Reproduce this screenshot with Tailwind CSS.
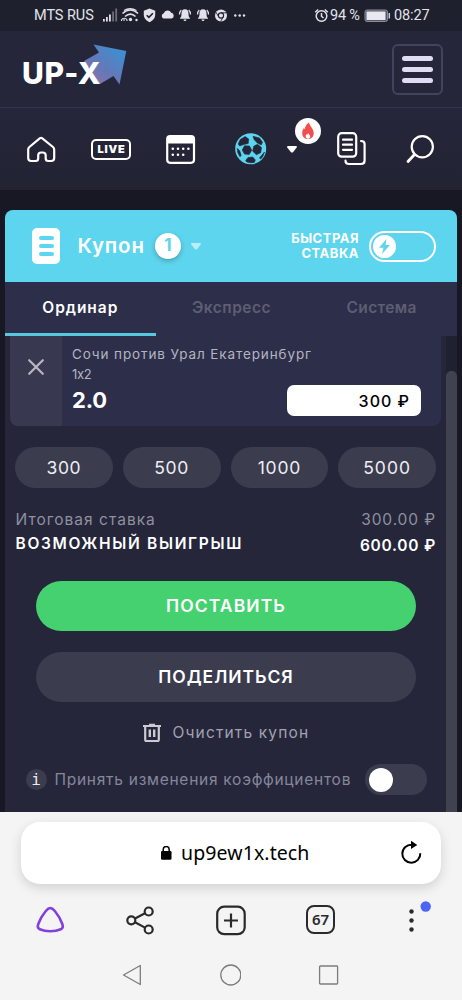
<!DOCTYPE html>
<html lang="ru">
<head>
<meta charset="utf-8">
<title>UP-X</title>
<script src="https://cdn.jsdelivr.net/npm/@tailwindcss/browser@4"></script>
</head>
<body class="w-[462px] h-[1000px] overflow-hidden bg-[#171823] font-['Inter','Open_Sans',sans-serif] text-white whitespace-nowrap flex flex-col">

<!-- status bar -->
<div class="h-[31px] shrink-0 bg-[#1f202e] flex items-center text-[14.5px] font-['Roboto',sans-serif] text-[#e2e3ea] pl-[34px]">
  <span class="w-[68px] tracking-[-0.06px]">MTS RUS</span>
  <svg class="w-[146px] h-[31px] shrink-0" viewBox="102 0 146 31" fill="#e2e3ea">
    <path d="M103 19h1.800v2.500h-1.800zM106 17h1.800v4.500h-1.800zM109 14.500h1.800v7h-1.800z"/>
    <path d="M112.200 11.500h1.800v10h-1.800zM115.300 8.500h1.800v13h-1.800z" opacity=".4"/>
    <g fill="none" stroke="#e2e3ea" stroke-width="1.600"><path d="M122.500 13.500q8-7 15.500 0M125 16.500q5.500-4.800 10.500 0"/><path d="M124 10.500q6-3.500 12.500 0" stroke-width="1.300"/><path d="M121.500 21v-1a3 3 0 0 1 5.500 0v1M124 21v-2" stroke-width="1.100"/></g>
    <circle cx="130.500" cy="19.500" r="1.700"/><circle cx="136.500" cy="20" r="1.200"/>
    <path d="M149.500 8.500l5.700 2.200v4.300q0 4.500-5.700 7.200-5.700-2.700-5.700-7.200v-4.300z"/><path d="M146.700 15.200l2.200 2.200 4-4.200" fill="none" stroke="#1f202e" stroke-width="1.600"/>
    <path d="M163.500 18.500a2.800 2.800 0 0 1 .3-5.300 4 4 0 0 1 7.400-.5 3 3 0 0 1 .5 5.800z"/>
    <g id="bell"><path d="M185 9.200c2.700 0 3.500 2 3.500 4.200 0 3 .6 3.800 1.500 4.600v.8h-10v-.8c.9-.8 1.500-1.600 1.500-4.600 0-2.200.8-4.200 3.500-4.200zM183.500 19.500h3a1.500 1.500 0 0 1-3 0z"/><path d="M179.500 14.500q0-3 1.800-4.500M190.500 14.500q0-3-1.800-4.500" fill="none" stroke="#e2e3ea" stroke-width="1.200"/></g>
    <use href="#bell" x="18"/>
    <circle cx="221" cy="15.500" r="6"/><g fill="none" stroke="#1f202e"><circle cx="221" cy="15.500" r="2.600" stroke-width="1.100"/><path d="M221 12.800h5.500M218.700 16.800l-2.800-4.700M223.300 16.900l-2.700 4.500" stroke-width=".9"/></g>
    <circle cx="235.300" cy="15.500" r="1.200"/><circle cx="239.700" cy="15.500" r="1.200"/><circle cx="244" cy="15.500" r="1.200"/>
  </svg>
  <svg class="ml-[66px] w-[15px] h-[15px] shrink-0" viewBox="0 0 15 15" fill="none" stroke="#e2e3ea" stroke-width="1.500"><circle cx="7.500" cy="8" r="5.300"/><path d="M7.500 5v3.200l2 1.800M1.200 4.200l3-2.700M13.800 4.200l-3-2.700"/></svg>
  <span class="ml-[1px] w-[34px] tracking-[-0.2px]">94 %</span>
  <svg class="w-[30px] h-[15px] shrink-0" viewBox="0 0 30 15"><rect x="1" y="2" width="22.500" height="11.500" rx="2" fill="#55566a" stroke="#8b8c98"/><rect x="2.500" y="3.500" width="19" height="8.500" rx=".5" fill="#e8e8ee"/><path d="M25.300 5v5.500" stroke="#c9cad2" stroke-width="1.500"/></svg>
  <span class="tracking-[-0.1px]">08:27</span>
</div>

<!-- site header -->
<header class="h-[77px] shrink-0 bg-[#25263a] border-b border-[#34354c] flex items-start justify-between pl-[22px] pr-[19px]">
  <div class="relative w-[106px] h-[60px]">
    <svg class="absolute left-[58px] top-[12px]" width="48" height="44" viewBox="80 43 48 44">
      <defs><linearGradient id="arrow" x1="1" y1="0" x2="0.100" y2="1"><stop offset=".15" stop-color="#3e8fd0"/><stop offset=".6" stop-color="#6478b8"/><stop offset="1" stop-color="#8d72ae"/></linearGradient></defs>
      <path d="M93.500 44.500L126.300 51 119.500 84.500 113.500 76 100 84 84 61 99 52.500z" fill="url(#arrow)"/>
    </svg>
    <span class="absolute left-[-1px] top-[24px] text-[30px] leading-[36px] font-['Inter'] font-extrabold tracking-[0.600px] ml-[1px]">UP-X</span>
  </div>
  <div class="mt-[13px] w-[51px] h-[51px] rounded-[6px] border-2 border-[#42435c] flex flex-col items-center justify-center gap-[6px]">
    <i class="block w-[31px] h-[5px] rounded-full bg-[#dfdcf4]"></i>
    <i class="block w-[31px] h-[5px] rounded-full bg-[#dfdcf4]"></i>
    <i class="block w-[31px] h-[5px] rounded-full bg-[#dfdcf4]"></i>
  </div>
</header>

<!-- navigation -->
<nav class="h-[82px] shrink-0 bg-gradient-to-b from-[#25263a] to-[#222333] flex items-center pl-[26px]">
  <svg class="w-[30px] h-[30px] shrink-0" viewBox="26 134 30 30" fill="none" stroke="#fff" stroke-width="2.200" stroke-linejoin="round"><path d="M40 138.200q1-.8 2 0l11 8.800q1.200 1 1.200 2.500v8.500q0 3-3 3h-3q-2.500 0-2.500-2.500v-3q0-3-3-3h-1.500q-3 0-3 3v3q0 2.500-2.500 2.500h-4.500q-3 0-3-3v-8.500q0-1.500 1.200-2.500z"/></svg>
  <div class="ml-[35px] w-[40px] h-[21px] shrink-0 rounded-[5px] border-2 border-white flex items-center justify-center text-[11px] leading-none font-black tracking-[0.800px] pl-[1px]">LIVE</div>
  <svg class="ml-[35px] w-[30px] h-[32px] shrink-0" viewBox="166 132 30 32"><rect x="167.200" y="135.200" width="26.800" height="26.600" rx="3" fill="none" stroke="#fff" stroke-width="2.200"/><path d="M167 142.500v-4q0-3.500 3-3.500h21q3 0 3 3.500v4z" fill="#fff"/><path d="M172.800 147.800h18M172.800 153.800h12" fill="none" stroke="#fff" stroke-width="2.600" stroke-linecap="round" stroke-dasharray="0 5.200"/></svg>
  <svg class="ml-[38px] w-[34px] h-[34px] shrink-0" viewBox="234 132 34 34"><circle cx="250.700" cy="148.800" r="15.500" fill="#5dd5ee"/><g fill="#25263a" stroke="#25263a" stroke-width=".6" stroke-linejoin="round"><path d="M244.500 145.800l5 .2 2.300 4.200-2.600 4.200-4.700-.3-2.300-4z"/><path d="M257.500 144.300l4 3.200-.8 5.200-4.300 2-3.700-3.500 1-5z"/><path d="M240.200 139.500l5-3 3.500 2.500-.5 4.500-4.500 1-4 1.500-1.500-2z"/><path d="M253 136.300l6.500 1.700 3 4.200-1.300 2.800-4.200-2.200-3-3.500z"/><path d="M237.200 148.300l2.500 2.500 1.500 4.500-1.200 1.500q-3-4-2.800-8.500z"/><path d="M248 157.500l4.800-.5 2.500 3-1 2.500q-4 .8-8-.7l-.5-1.500z"/><path d="M262 155l2.500-3q-1 4.500-3.700 7l-1.300-1z"/></g></svg>
  <div class="relative ml-[18px] w-[36px] h-[82px] shrink-0">
    <svg class="absolute left-0 top-[37px]" width="12" height="9" viewBox="0 0 12 9"><path d="M2 1h8q1.500.3.700 1.500L7 7.200q-1 .8-2 0L1.200 2.500Q.6 1.300 2 1z" fill="#fff"/></svg>
    <div class="absolute left-[9px] top-[10px] w-[26px] h-[26px] rounded-full bg-white flex items-center justify-center">
      <svg width="14" height="18" viewBox="0 0 14 18"><path d="M8 .5c.5 3.500 4.700 6 4.700 10.500 0 4-2.500 6-5.700 6s-5.800-2-5.800-6c0-2.500 1-4 1.800-5l.8 1.500C4 5 5 2 8 .5z" fill="#f24e4e"/><path d="M7 11l2 2.500q1 3-2 3.200-2.800-.2-2.300-3.200l.8-1.200.8.500z" fill="#fff"/></svg>
    </div>
  </div>
  <svg class="ml-[14px] w-[30px] h-[36px] shrink-0" viewBox="336 131 30 36" fill="none" stroke="#fff" stroke-width="2.200" stroke-linecap="round"><rect x="338.200" y="133.200" width="18" height="23.500" rx="3.500"/><path d="M343 139.700h9M343 144.700h9M343 149.800h9M361 141q3.600 0 3.600 3v16.500q0 3.500-3.600 3.500h-12q-3.500 0-3.500-3.300"/></svg>
  <svg class="ml-[38px] w-[32px] h-[32px] shrink-0" viewBox="404 133 32 32" fill="none" stroke="#fff" stroke-width="2.200" stroke-linecap="round"><circle cx="422.300" cy="146.700" r="10.600"/><path d="M414.500 154.500l-6.500 7" stroke-width="2.800"/></svg>
</nav>

<!-- coupon -->
<main class="h-[622px] shrink-0 pt-[20px] px-[5px]">
  <section class="w-[452px] h-[602px] rounded-t-[8px] overflow-hidden bg-[#25263a] flex flex-col">
    <div class="h-[72px] shrink-0 bg-[#5dd5ee] flex items-center pl-[27px]">
      <div class="w-[28px] h-[36px] rounded-[5px] bg-white flex flex-col items-center justify-center gap-[4px]">
        <i class="block w-[15px] h-[4px] rounded-full bg-[#5dd5ee]"></i>
        <i class="block w-[15px] h-[4px] rounded-full bg-[#5dd5ee]"></i>
        <i class="block w-[15px] h-[4px] rounded-full bg-[#5dd5ee]"></i>
      </div>
      <span class="ml-[17.500px] w-[77.500px] text-[20.500px] font-semibold tracking-[0.850px]">Купон</span>
      <span class="w-[26px] h-[26px] rounded-full bg-white text-[#5dd5ee] text-[17px] font-bold shadow-[0_2px_5px_rgba(0,0,0,.25)] flex items-center justify-center">1</span>
      <svg class="ml-[9px]" width="12" height="9" viewBox="0 0 12 9"><path d="M2 1h8q1.500.3.700 1.500L7 7.200q-1 .8-2 0L1.200 2.500Q.6 1.300 2 1z" fill="#b9eef8"/></svg>
      <div class="ml-auto text-right text-[13px] leading-[15px] font-bold tracking-[0.500px]">БЫСТРАЯ<br>СТАВКА</div>
      <div class="ml-[10px] mr-[21px] w-[67px] h-[31px] rounded-full border-2 border-white flex items-center pl-[2px]">
        <div class="w-[23px] h-[23px] rounded-full bg-white flex items-center justify-center"><svg width="13" height="17" viewBox="0 0 13 17"><path d="M8.500 1L1 9.700h4.500L4 16l8-9H7.500z" fill="#5dd5ee"/></svg></div>
      </div>
    </div>
    <div class="h-[54px] shrink-0 bg-[#2d2e49] grid grid-cols-3 text-[15.500px] font-semibold text-[#5d5e74] text-center leading-[51px]">
      <div class="border-b-[3px] border-[#58c8e0] text-white tracking-[0.950px]">Ординар</div>
      <div class="tracking-[0.500px] pl-[1px]">Экспресс</div>
      <div class="tracking-[0.350px]">Система</div>
    </div>
    <div class="grow flex">
      <div class="w-[441px] flex flex-col">
        <div class="ml-[5px] w-[431px] h-[90px] shrink-0 rounded-b-[8px] overflow-hidden bg-[#2d2e49] flex">
          <div class="w-[52px] bg-[#383950] flex justify-center pt-[22px]"><svg width="18" height="18" viewBox="0 0 18 18" stroke="#b6b7c2" stroke-width="2.200" stroke-linecap="round"><path d="M2.200 2.200l13.600 13.600M15.800 2.200L2.200 15.800"/></svg></div>
          <div class="pl-[10px] pt-[8px] w-[379px]">
            <div class="text-[13.500px] leading-[20px] tracking-[0.880px] text-[#b3b4c1]">Сочи против Урал Екатеринбург</div>
            <div class="text-[13px] leading-[20px] tracking-[-0.300px] text-[#b3b4c1]">1x2</div>
            <div class="flex">
              <span class="text-[22px] leading-[32px] font-bold tracking-[-0.200px] w-[215px]">2.0</span>
              <div class="mt-[1px] w-[134px] h-[31px] rounded-[7px] bg-white text-black text-[16px] font-medium tracking-[1px] flex items-center justify-end pr-[11px]">300 ₽</div>
            </div>
          </div>
        </div>
        <div class="mt-[20.500px] ml-[10px] w-[421px] h-[41px] shrink-0 grid grid-cols-4 gap-[10px] text-[17.500px] text-[#edeef4] text-center leading-[41px]">
          <div class="rounded-full bg-[#3b3c4e] tracking-[0.700px]">300</div>
          <div class="rounded-full bg-[#3b3c4e] tracking-[0.700px]">500</div>
          <div class="rounded-full bg-[#3b3c4e] tracking-[0.800px]">1000</div>
          <div class="rounded-full bg-[#3b3c4e] tracking-[1px]">5000</div>
        </div>
        <div class="mt-[20.500px] ml-[10.500px] w-[420.500px] flex justify-between text-[15.500px] leading-[24px] text-[#8f90a0]"><span class="tracking-[1.020px]">Итоговая ставка</span><span class="tracking-[0.900px]">300.00 ₽</span></div>
        <div class="ml-[10.500px] w-[420.500px] flex justify-between text-[15.500px] leading-[24px] font-semibold"><span class="tracking-[1.680px]">ВОЗМОЖНЫЙ ВЫИГРЫШ</span><span class="tracking-[0.750px] pt-[2px]">600.00 ₽</span></div>
        <div class="mt-[23px] ml-[31px] w-[380px] h-[50px] shrink-0 rounded-full bg-[#45d16f] text-center text-[17.500px] leading-[50px] font-semibold tracking-[1.100px]">ПОСТАВИТЬ</div>
        <div class="mt-[21px] ml-[31px] w-[380px] h-[50px] shrink-0 rounded-full bg-[#3b3c4e] text-center text-[17.500px] leading-[50px] font-semibold tracking-[0.950px]">ПОДЕЛИТЬСЯ</div>
        <div class="mt-[18px] h-[26px] shrink-0 flex items-center pl-[137px] text-[15.500px] text-[#a1a2b0] tracking-[1.150px]">
          <svg class="mr-[10.500px]" width="20" height="20" viewBox="0 0 20 20"><path d="M1 3h18M7 1.700h6" stroke="#c9cad2" stroke-width="2"/><path d="M3.200 4v12.500q0 1.500 1.500 1.500h10.600q1.500 0 1.500-1.500V4" fill="none" stroke="#c9cad2" stroke-width="2.200"/><path d="M7.800 6.500v7.500M12.200 6.500v7.500" stroke="#c9cad2" stroke-width="2.400"/></svg>Очистить купон
        </div>
        <div class="mt-[18px] h-[31px] shrink-0 flex items-center pl-[20.500px] text-[15.500px] text-[#85869a] tracking-[0.730px]">
          <span class="w-[21px] h-[21px] rounded-full bg-[#3b3c4e] text-[#e9e9f0] text-[16px] font-['DejaVu_Sans_Mono',monospace] tracking-normal flex items-center justify-center">i</span>
          <span class="ml-[8px] w-[310px]">Принять изменения коэффициентов</span>
          <span class="w-[62px] h-[31px] rounded-full bg-[#3b3c4e] flex items-center pl-[4px]"><i class="block w-[24px] h-[24px] rounded-full bg-white"></i></span>
        </div>
      </div>
      <div class="w-[11px] bg-[#1f2030] pt-[35px]"><div class="h-full rounded-t-[5px] bg-[#41424f]"></div></div>
    </div>
  </section>
</main>

<!-- browser bar -->
<footer class="grow bg-[#f4f4f4] text-black flex flex-col pt-[10px]">
  <div class="ml-[21px] w-[420px] h-[62px] shrink-0 rounded-[19px] bg-white shadow-[0_4px_12px_rgba(0,0,0,.14)] flex items-center pl-[139px]">
    <svg width="12" height="14" viewBox="0 0 12 14"><rect x="1" y="5" width="10.500" height="8.700" rx="1.300"/><path d="M3.200 6V3.500a3 3 0 0 1 6 0V6" fill="none" stroke="#000" stroke-width="1.500"/></svg>
    <span class="ml-[9px] w-[217px] text-[19.500px] font-['Noto_Sans',sans-serif] tracking-[0.100px]">up9ew1x.tech</span>
    <svg width="26" height="26" viewBox="0 0 26 26"><path d="M14 4.800a9 9 0 1 0 8.300 8.500" fill="none" stroke="#000" stroke-width="2"/><path d="M13 .8v8.200l6.300-4z"/></svg>
  </div>
  <div class="h-[71px] shrink-0 flex items-center pl-[34px]">
    <svg class="w-[32px] h-[32px] shrink-0" viewBox="34 903 32 32" fill="none" stroke="#8240dd" stroke-width="2.600" stroke-linejoin="round"><path d="M50.300 907q2 0 4.500 3 5 6 7.500 13 1.500 4-1.500 5.300-4.500 2-10.500 2t-10.500-2q-3-1.300-1.500-5.300 2.500-7 7.500-13 2.500-3 4.500-3z"/></svg>
    <svg class="ml-[58px] w-[32px] h-[32px] shrink-0" viewBox="124 903 32 32" fill="none" stroke="#2a2a2c" stroke-width="2.200"><circle cx="131.300" cy="919.300" r="4"/><circle cx="148.700" cy="910.500" r="4"/><circle cx="148.700" cy="928.500" r="4"/><path d="M135 917.500l10-5.200M135 921.200l10 5.400"/></svg>
    <svg class="ml-[58px] w-[34px] h-[34px] shrink-0" viewBox="214 902 34 34" fill="none" stroke="#2a2a2c" stroke-width="2.200"><rect x="217.200" y="905.700" width="27.500" height="27.500" rx="7"/><path d="M231 912.500v14M224 919.500h14"/></svg>
    <div class="ml-[58px] w-[29px] h-[29px] shrink-0 rounded-[8px] border-2 border-[#2a2a2c] text-[#2a2a2c] text-[15px] font-semibold font-['Noto_Sans',sans-serif] leading-none flex items-center justify-center">67</div>
    <svg class="ml-[72px] w-[30px] h-[50px] shrink-0" viewBox="407 894 30 50"><circle cx="411.500" cy="910.500" r="2.200" fill="#2a2a2c"/><circle cx="411.500" cy="919.500" r="2.200" fill="#2a2a2c"/><circle cx="411.500" cy="928.500" r="2.200" fill="#2a2a2c"/><circle cx="425.700" cy="905.500" r="5.200" fill="#4d65f5"/></svg>
  </div>
  <div class="h-[40px] shrink-0 flex items-center pl-[121px] gap-[76px]">
    <svg width="22" height="22" viewBox="0 0 22 22" fill="none" stroke="#7c7c7e" stroke-width="1.300" stroke-linejoin="round"><path d="M19.300 1.500v19L2.500 11z"/></svg>
    <svg width="22" height="22" viewBox="0 0 22 22" fill="none" stroke="#7c7c7e" stroke-width="1.300"><circle cx="11.800" cy="11" r="10"/></svg>
    <svg width="22" height="22" viewBox="0 0 22 22" fill="none" stroke="#7c7c7e" stroke-width="1.300"><rect x="2.600" y="2" width="18" height="18" rx=".8"/></svg>
  </div>
</footer>
</body>
</html>
